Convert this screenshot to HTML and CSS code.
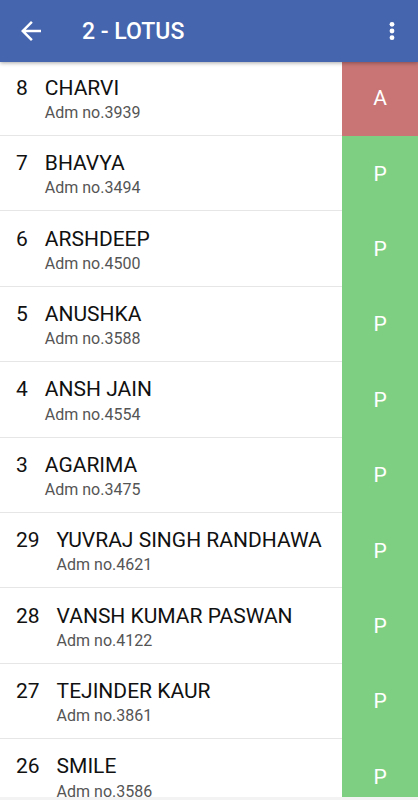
FILE: index.html
```html
<!DOCTYPE html>
<html>
<head>
<meta charset="utf-8">
<link rel="stylesheet" href="styles.css">
</head>
<body>
<div class="screen">
  <header class="toolbar">
    <button class="icon-btn back" aria-label="Back">
      <svg width="30" height="30" viewBox="0 0 24 24"><path d="M20 11H7.83l5.59-5.59L12 4l-8 8 8 8 1.41-1.41L7.83 13H20v-2z" fill="#fff"/></svg>
    </button>
    <div class="title">2 - LOTUS</div>
    <button class="icon-btn more" aria-label="More">
      <svg width="24" height="24" viewBox="0 0 24 24"><circle cx="12" cy="5.3" r="2.4" fill="#fff"/><circle cx="12" cy="12" r="2.4" fill="#fff"/><circle cx="12" cy="18.7" r="2.4" fill="#fff"/></svg>
    </button>
  </header>
  <div class="list">
    <div class="row"><div class="info"><span class="roll">8</span><div class="names"><div class="name">CHARVI</div><div class="adm">Adm no.3939</div></div></div><div class="status absent">A</div></div>
    <div class="row"><div class="info"><span class="roll">7</span><div class="names"><div class="name">BHAVYA</div><div class="adm">Adm no.3494</div></div></div><div class="status present">P</div></div>
    <div class="row"><div class="info"><span class="roll">6</span><div class="names"><div class="name">ARSHDEEP</div><div class="adm">Adm no.4500</div></div></div><div class="status present">P</div></div>
    <div class="row"><div class="info"><span class="roll">5</span><div class="names"><div class="name">ANUSHKA</div><div class="adm">Adm no.3588</div></div></div><div class="status present">P</div></div>
    <div class="row"><div class="info"><span class="roll">4</span><div class="names"><div class="name">ANSH JAIN</div><div class="adm">Adm no.4554</div></div></div><div class="status present">P</div></div>
    <div class="row"><div class="info"><span class="roll">3</span><div class="names"><div class="name">AGARIMA</div><div class="adm">Adm no.3475</div></div></div><div class="status present">P</div></div>
    <div class="row"><div class="info"><span class="roll">29</span><div class="names"><div class="name">YUVRAJ SINGH RANDHAWA</div><div class="adm">Adm no.4621</div></div></div><div class="status present">P</div></div>
    <div class="row"><div class="info"><span class="roll">28</span><div class="names"><div class="name">VANSH KUMAR PASWAN</div><div class="adm">Adm no.4122</div></div></div><div class="status present">P</div></div>
    <div class="row"><div class="info"><span class="roll">27</span><div class="names"><div class="name">TEJINDER KAUR</div><div class="adm">Adm no.3861</div></div></div><div class="status present">P</div></div>
    <div class="row"><div class="info"><span class="roll">26</span><div class="names"><div class="name">SMILE</div><div class="adm">Adm no.3586</div></div></div><div class="status present">P</div></div>
  </div>
</div>
</body>
</html>
```
FILE: styles.css
```css
* { box-sizing: border-box; }
html, body { margin: 0; padding: 0; }
body {
  background: #f3f3f3;
  font-family: Roboto, "Noto Sans", sans-serif;
  width: 418px;
  height: 800px;
  overflow: hidden;
}
.screen {
  height: 797px;
  overflow: hidden;
  background: #fff;
}
.toolbar {
  position: relative;
  z-index: 2;
  height: 62px;
  background: #4565ae;
  display: flex;
  align-items: center;
  box-shadow: 0 1px 4px rgba(0,0,0,0.35);
}
.icon-btn {
  border: 0;
  background: none;
  padding: 0;
  display: flex;
  align-items: center;
  justify-content: center;
}
.back { margin-left: 15.5px; width: 30px; height: 30px; }
.title {
  margin-left: 36.5px;
  color: #fff;
  font-size: 23px;
  line-height: 28px;
  font-weight: 500;
  flex: 1;
  margin-top: 1px;
}
.more { margin-right: 13.7px; width: 24px; height: 24px; margin-bottom: 1px; }
.list {
  margin-top: -1.4px;
  position: relative;
  z-index: 1;
}
.row {
  display: flex;
  height: 75.4px;
  border-bottom: 1px solid #e6e6e6;
}
.info {
  flex: 1;
  display: flex;
  align-items: baseline;
  padding: 15.2px 0 0 16px;
  gap: 17px;
}
.roll, .name {
  font-size: 21px;
  line-height: 25px;
  color: #111;
}
.adm {
  margin-top: 2.2px;
  font-size: 16px;
  line-height: 20px;
  color: #555;
}
.status {
  width: 76px;
  display: flex;
  align-items: center;
  justify-content: center;
  color: #fff;
  font-size: 21px;
  margin-bottom: -1px;
}
.absent { background: #c97575; }
.present { background: #7fcf83; }
```
